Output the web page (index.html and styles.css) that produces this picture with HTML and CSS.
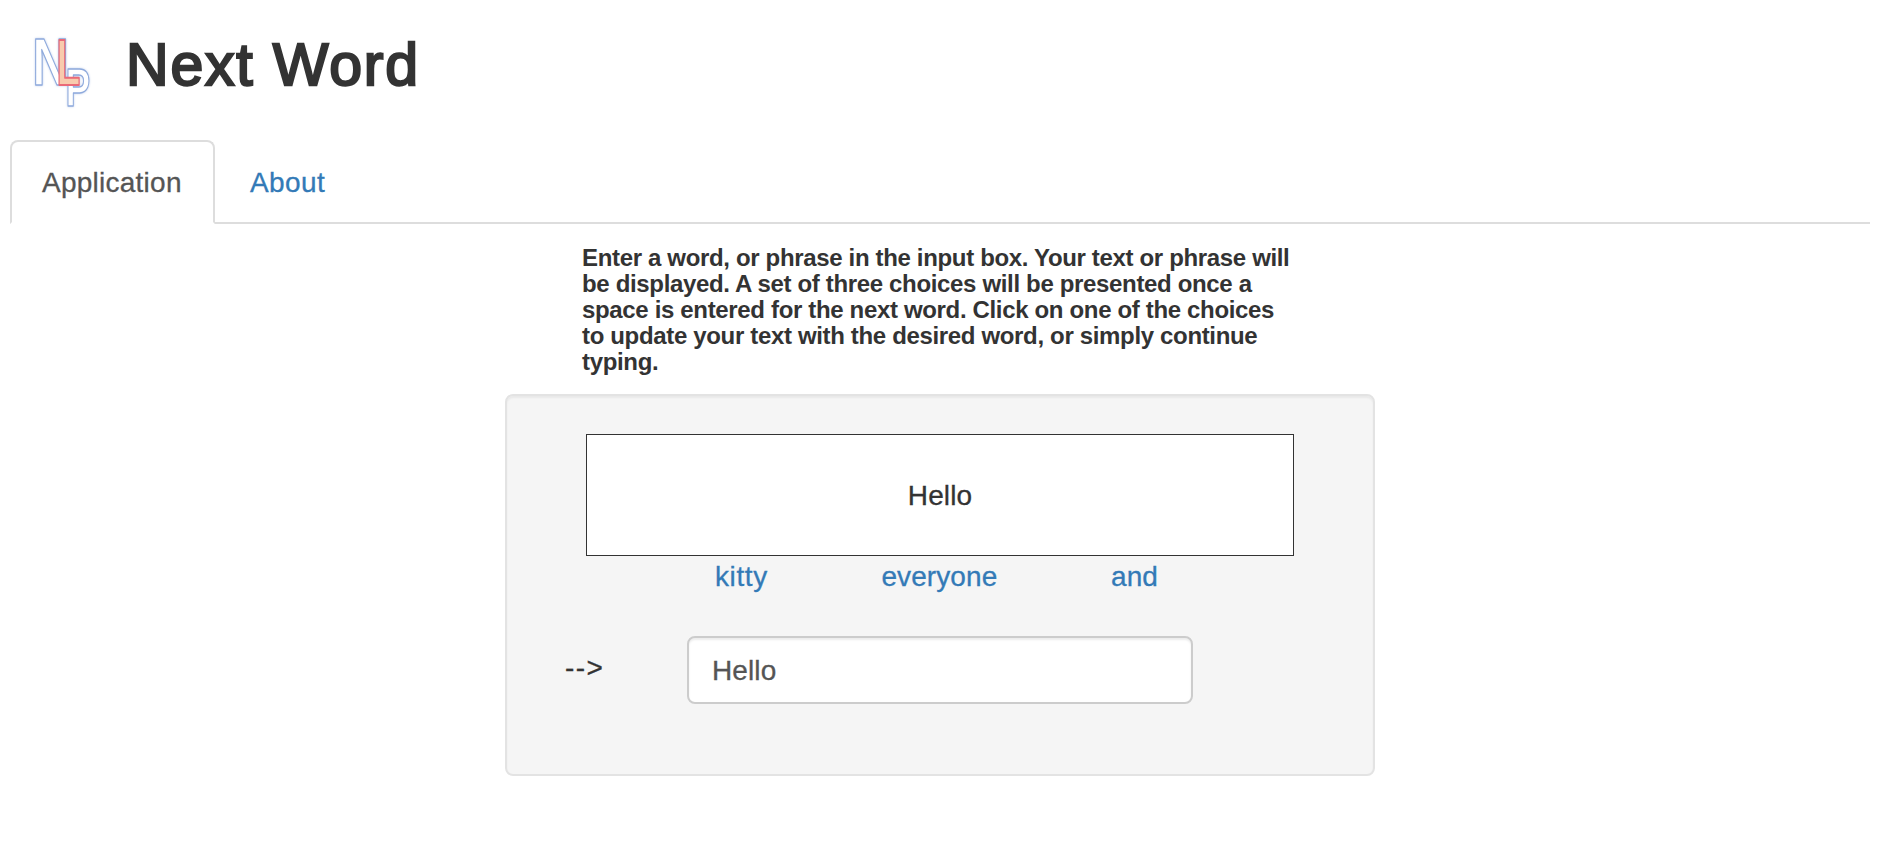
FILE: index.html
```html
<!DOCTYPE html>
<html lang="en">
<head>
<meta charset="utf-8">
<title>Next Word</title>
<link rel="stylesheet" href="styles.css">
</head>
<body>
<header class="header">
  <svg class="logo" width="70" height="80" viewBox="0 0 70 80" aria-label="NLP">
    <g class="logo-line">
      <text transform="translate(2.2 58.2) scale(.77 1)" font-size="66">N</text>
      <text transform="translate(35.6 78.8) scale(.7 1)" font-size="53">P</text>
    </g>
    <text class="logo-l" transform="translate(26.6 57.8) scale(.6 1)" font-size="65">L</text>
  </svg>
  <h1 class="title">Next Word</h1>
</header>
<nav class="tabs">
  <a class="tab tab-active">Application</a>
  <a class="tab">About</a>
</nav>
<main class="content">
  <p class="help">Enter a word, or phrase in the input box. Your text or phrase will<br>be displayed. A set of three choices will be presented once a<br>space is entered for the next word. Click on one of the choices<br>to update your text with the desired word, or simply continue<br>typing.</p>
  <section class="well">
    <div class="display">Hello</div>
    <div class="choices"><a>kitty</a><a>everyone</a><a>and</a></div>
    <div class="entry">
      <label class="arrow" for="phrase">--&gt;</label>
      <input class="phrase" id="phrase" type="text" value="Hello">
    </div>
  </section>
</main>
</body>
</html>
```
FILE: styles.css
```css
* { box-sizing: border-box; }
body {
  margin: 0;
  background: #fff;
  color: #333;
  font: 28px/40px "Liberation Sans", Arial, sans-serif;
  letter-spacing: 0.1px;
  -webkit-text-stroke: 0.3px currentColor;
}
.header {
  display: flex;
  align-items: flex-start;
  height: 140px;
  padding: 27px 0 0 30px;
}
.logo { flex: none; overflow: visible; font-family: "Liberation Sans", Arial, sans-serif; font-weight: bold; letter-spacing: 0; -webkit-text-stroke: 0; filter: drop-shadow(0 0 1px #c3d2ee); }
.logo-line { fill: #fff; stroke: #8faadc; stroke-width: 1.4; stroke-linejoin: round; }
.logo-l { fill: #f8cbad; stroke: #ea6a78; stroke-width: 2; stroke-linejoin: round; }
.title { margin: 5px 0 0 26px; font-size: 59px; line-height: 66px; font-weight: normal; letter-spacing: 1.8px; -webkit-text-stroke: 2.3px currentColor; }
.tabs {
  display: flex;
  gap: 4px;
  height: 84px;
  margin: 0 24px 0 10px;
  border-bottom: 2px solid #ddd;
}
.tab {
  height: 84px;
  padding: 21px 29px 19px;
  border: 2px solid transparent;
  border-radius: 8px 8px 0 0;
  color: #337ab7;
  letter-spacing: 0.4px;
}
.tab-active { width: 205px; padding-left: 30px; background: #fff; border-color: #ddd; border-bottom-color: #fff; color: #555; letter-spacing: 0.25px; }
.content { width: 870px; margin: 21px 0 0 505px; }
.help { margin: 0; padding-left: 77px; height: 149px; font-size: 24px; line-height: 26px; font-weight: bold; letter-spacing: -0.34px; white-space: nowrap; -webkit-text-stroke: 0; }
.well {
  height: 382px;
  padding: 38px 79px;
  border: 2px solid #e3e3e3;
  border-radius: 8px;
  background: #f5f5f5;
  box-shadow: inset 0 2px 2px rgba(0, 0, 0, 0.05);
}
.display { height: 122px; padding-top: 41px; border: 1px solid #333; background: #fff; text-align: center; }
.choices { display: flex; justify-content: space-between; padding: 1px 136px 0 129px; color: #337ab7; }
.choices a:first-child { letter-spacing: 0.6px; }
.entry { display: flex; align-items: center; margin: 39px 0 0 -21px; }
.arrow { width: 122px; margin-top: -5px; letter-spacing: 1.4px; }
.phrase {
  width: 506px;
  height: 68px;
  padding: 13px 24px 11px 23px;
  border: 2px solid #ccc;
  border-radius: 8px;
  background: #fff;
  box-shadow: inset 0 2px 2px rgba(0, 0, 0, 0.075);
  color: #555;
  font: inherit;
  letter-spacing: inherit;
}
```
